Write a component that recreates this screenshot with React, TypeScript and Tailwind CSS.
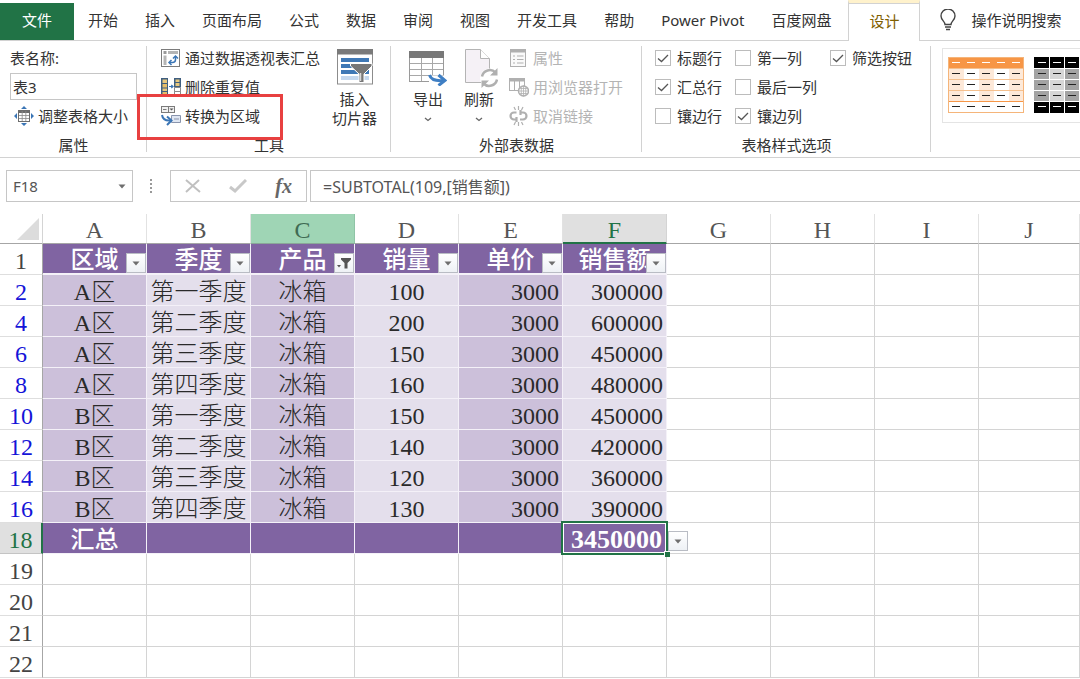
import type { ReactNode } from 'react';

const tabs = ['开始', '插入', '页面布局', '公式', '数据', '审阅', '视图', '开发工具', '帮助', 'Power Pivot', '百度网盘'];
const columns = ['A', 'B', 'C', 'D', 'E', 'F', 'G', 'H', 'I', 'J'];
const headers = ['区域', '季度', '产品', '销量', '单价', '销售额'];
const emptyColumns = ['G', 'H', 'I', 'J'];
const rows = [
  { n: 2, cells: ['A区', '第一季度', '冰箱', '100', '3000', '300000'] },
  { n: 4, cells: ['A区', '第二季度', '冰箱', '200', '3000', '600000'] },
  { n: 6, cells: ['A区', '第三季度', '冰箱', '150', '3000', '450000'] },
  { n: 8, cells: ['A区', '第四季度', '冰箱', '160', '3000', '480000'] },
  { n: 10, cells: ['B区', '第一季度', '冰箱', '150', '3000', '450000'] },
  { n: 12, cells: ['B区', '第二季度', '冰箱', '140', '3000', '420000'] },
  { n: 14, cells: ['B区', '第三季度', '冰箱', '120', '3000', '360000'] },
  { n: 16, cells: ['B区', '第四季度', '冰箱', '130', '3000', '390000'] },
];

const PivotIcon = () => (
  <svg width="20" height="20" viewBox="0 0 20 20" fill="none">
    <rect x="0.500" y="1.500" width="18" height="17" fill="#fff" stroke="#7b7b7b" />
    <rect x="2.500" y="3" width="3" height="3" fill="#9a9a9a" />
    <rect x="7" y="3" width="10" height="3" fill="#b5b5b5" />
    <rect x="2.500" y="7.500" width="3" height="9.500" fill="#b5b5b5" />
    <path d="M9 14.500h2.500q3 0 3-3V9" stroke="#3a75b5" strokeWidth="1.500" />
    <path d="M12 10.500 14.500 8l2.500 2.500M10.500 12 8 14.500l2.500 2.500" stroke="#3a75b5" strokeWidth="1.500" />
  </svg>
);

const DuplicatesIcon = () => (
  <svg width="20" height="20" viewBox="0 0 20 20" fill="none">
    <rect x="0" y="1" width="7" height="18" fill="#3f5f80" />
    <path d="M1.500 2.500H6v3.500H1.500zM1.500 11.500H6v2.500H1.500z" fill="#e8c87d" />
    <path d="M1.500 7H6v3.500H1.500zM1.500 15H6v2.500H1.500z" fill="#e5bd68" />
    <path d="M8 9.500h4M10.300 8l1.700 1.500-1.700 1.500" stroke="#3a75b5" strokeWidth="1.200" />
    <rect x="13" y="1" width="7" height="9.500" fill="#3f5f80" />
    <path d="M14.500 2.500h4v2.500h-4zM14.500 6h4v3h-4z" fill="#e8c87d" />
    <path d="M13.500 10.500h6v4h-6zM13.500 14.500h6v4h-6z" fill="#fff" stroke="#8b8b8b" />
  </svg>
);

const ConvertIcon = () => (
  <svg width="20" height="20" viewBox="0 0 20 20" fill="none">
    <rect x="0.500" y="0.500" width="13" height="6" fill="#f1f1f1" stroke="#7b7b7b" />
    <path d="M7.500 0.500v6M2 3.500h3.500" stroke="#7b7b7b" />
    <path d="M8.500 2.500h4l-2 2z" fill="#555" />
    <path d="M10.500 9.500h9v7h-9z" fill="#dfe6f2" stroke="#8994ad" />
    <path d="M13 13h5" stroke="#8994ad" />
    <path d="M1 9q1 6 8 5.500" stroke="#3a75b5" strokeWidth="2" />
    <path d="M6 10.500 10.500 14.500 6 19" stroke="#3a75b5" strokeWidth="2" />
  </svg>
);

const ResizeIcon = () => (
  <svg width="20" height="20" viewBox="0 0 20 20" fill="none">
    <rect x="4.500" y="4.500" width="11" height="11" fill="#fff" stroke="#6d6d6d" />
    <path d="M4.500 6h11" stroke="#6d6d6d" strokeWidth="2" />
    <path d="M8.200 5v10M11.800 5v10M5 9.500h10M5 12.500h10" stroke="#8a8a8a" strokeWidth="0.800" />
    <path d="M10 0l3 3H7zM10 20l3-3H7zM0 10l3-3v6zM20 10l-3-3v6z" fill="#3a75b5" />
  </svg>
);

const SlicerIcon = () => (
  <svg width="38" height="38" viewBox="0 0 38 38" fill="none">
    <rect x="1.500" y="1.500" width="35" height="34.500" fill="#fff" stroke="#8c8c8c" />
    <rect x="1" y="1" width="36" height="5.500" fill="#7a7a7a" />
    <path d="M5 10h28v4H5zM5 16h28v4H5zM5 22h28v4H5z" fill="#3f78b5" />
    <path d="M5 28h28v4H5z" fill="#c5d8ee" />
    <path d="M14.500 15.500H36v2.500l-8 8v8.500h-5V26l-8.500-8z" fill="#777" stroke="#fff" />
    <path d="M24.500 25v8" stroke="#d8d8d8" strokeWidth="1.500" />
  </svg>
);

const ExportIcon = () => (
  <svg width="38" height="38" viewBox="0 0 38 38" fill="none">
    <rect x="0.500" y="3.500" width="34" height="30" fill="#fff" stroke="#9a9a9a" />
    <rect x="0" y="3" width="35" height="7" fill="#787878" />
    <path d="M12.500 10v23M23.500 10v23M1 15.500h33M1 21.500h33M1 27.500h33" stroke="#a8a8a8" />
    <path d="M20 27.500h18V38H20z" fill="#fff" />
    <path d="M20.500 27q2 6.500 14 5.500" stroke="#3f7fc4" strokeWidth="3" />
    <path d="M29.500 27l6.500 5.500-6.500 5" stroke="#3f7fc4" strokeWidth="3" />
  </svg>
);

const RefreshIcon = () => (
  <svg width="38" height="40" viewBox="0 0 38 40" fill="none">
    <path d="M5.500 1.500h15l9 9v24h-24z" fill="#f5f1f6" stroke="#b4b4b4" />
    <path d="M20.500 1.500v9h9" stroke="#b4b4b4" fill="#fff" />
    <circle cx="29.500" cy="30" r="9.500" fill="#fff" />
    <path d="M22 28.500a8 8 0 0 1 13.500-4M37 31.500a8 8 0 0 1-13.500 4" stroke="#b0b0b0" strokeWidth="2.500" />
    <path d="M37.500 20v7.500H30zM21.500 40v-7.500H29z" fill="#b0b0b0" />
  </svg>
);

const PropertiesIcon = () => (
  <svg width="20" height="20" viewBox="0 0 20 20" fill="none" stroke="#b0b0b0">
    <rect x="1.500" y="1.500" width="15" height="17" fill="#fafafa" />
    <path d="M1 3h16" strokeWidth="3" />
    <path d="M4 8h2M4 11.500h2M4 15h2M8 8h6.500M8 11.500h6.500M8 15h6.500" strokeWidth="1.200" />
  </svg>
);

const BrowserIcon = () => (
  <svg width="20" height="20" viewBox="0 0 20 20" fill="none" stroke="#b0b0b0">
    <rect x="0.500" y="1.500" width="15" height="12" fill="#fff" />
    <path d="M0 3h16" strokeWidth="3" />
    <path d="M5.500 4v9M10.500 4v9" />
    <circle cx="14.500" cy="14" r="5" fill="#fff" strokeWidth="1.500" />
    <path d="M9.500 14h10M14.500 9v10M10.500 11.500h8M10.500 16.500h8" strokeWidth="0.800" />
    <ellipse cx="14.500" cy="14" rx="2.300" ry="5" strokeWidth="0.800" />
  </svg>
);

const UnlinkIcon = () => (
  <svg width="20" height="20" viewBox="0 0 20 20" fill="none" stroke="#b0b0b0">
    <path d="M7.500 6.500H5a3.500 3.500 0 0 0 0 7h2.500M7.500 11v5M11 13.500h3a3.500 3.500 0 0 0 0-7h-2.500M11.500 4v5" strokeWidth="2.200" />
    <path d="M9.500 0v4M9.500 16v4M5 1l1.500 3M14 1l-1.500 3M5 19l1.500-3M14 19l-1.500-3" strokeWidth="1.200" />
  </svg>
);

const BulbIcon = () => (
  <svg width="16" height="22" viewBox="0 0 16 22" fill="none" stroke="#444" strokeWidth="1.400">
    <path d="M5 15.500c0-3-4-4.500-4-8.500a7 7 0 0 1 14 0c0 4-4 5.500-4 8.500z" />
    <path d="M5 18h6M6 20.500h4" />
  </svg>
);

const Chevron = () => (
  <svg width="8" height="5" viewBox="0 0 8 5" fill="none" stroke="#666" strokeWidth="1.300">
    <path d="M1 1l3 2.500L7 1" />
  </svg>
);

const Triangle = () => (
  <svg width="8" height="5" viewBox="0 0 8 5" fill="#6e6e6e">
    <path d="M0.500 0.500h7L4 4.500z" />
  </svg>
);

const FunnelIcon = () => (
  <svg width="14" height="11" viewBox="0 0 14 11" fill="#555">
    <path d="M4 0h10v1.500L10.500 5v5.500h-3V5L4 1.500z" />
    <path d="M0 7h4L2 9.500z" />
  </svg>
);

function Group({ label, className, children }: { label: string; className: string; children: ReactNode }) {
  return (
    <section aria-label={label} className={`relative flex shrink-0 flex-col pt-[2px] ${className}`}>
      <div className="flex h-[87px]">{children}</div>
      <div className="flex h-[27px] items-center justify-center pt-0.5 leading-5">{label}</div>
      <div className="absolute right-0 top-[5px] h-[106px] w-px bg-[#d2d2d2]" />
    </section>
  );
}

function SmallButton({ icon, children, disabled }: { icon: ReactNode; children: ReactNode; disabled?: boolean }) {
  return (
    <button disabled={disabled} className="flex h-[29px] items-center gap-1 whitespace-nowrap disabled:text-[#b4b4b4]">
      {icon}
      {children}
    </button>
  );
}

function Check({ label, checked }: { label: string; checked?: boolean }) {
  return (
    <label className="flex h-[29px] items-center gap-1.5 whitespace-nowrap">
      <span className="relative flex size-4">
        <input type="checkbox" defaultChecked={checked} className="peer size-4 appearance-none border border-[#bcbcbc] bg-white" />
        <svg viewBox="0 0 16 16" fill="none" stroke="#555" strokeWidth="1.300" className="pointer-events-none absolute inset-0 size-4 opacity-0 peer-checked:opacity-100">
          <path d="M3 8.500l3.500 3L13 5" />
        </svg>
      </span>
      {label}
    </label>
  );
}

function StylePreview({ dark }: { dark?: boolean }) {
  const fill = (r: number, c: number) => {
    if (dark) return r === 0 || r === 4 ? '#000' : c % 2 ? '#d6d6d6' : '#a3a3a3';
    if (r === 0) return '#f79646';
    return r < 4 && c % 2 === 0 ? '#fde9d9' : '#fff';
  };
  const line = dark ? '#fff' : '#f5c08e';
  return (
    <svg width="76" height="56" viewBox="0 0 76 56" shapeRendering="crispEdges">
      {[0, 1, 2, 3, 4].map((r) =>
        [0, 1, 2, 3, 4].map((c) => (
          <g key={`${r}-${c}`}>
            <rect x={c * 15 + (c ? 1 : 0)} y={r * 11 + (r ? 1 : 0)} width={c ? 15 : 16} height={r ? 11 : 12} fill={fill(r, c)} />
            <rect x={c * 15 + 4} y={r * 11 + 5} width="8" height="1" fill={r === 0 || (dark && r === 4) ? '#fff' : '#222'} />
          </g>
        )),
      )}
      {[1, 2, 3, 4].map((r) => (
        <rect key={r} x="0" y={r * 11} width="76" height="1" fill={r === 4 && !dark ? '#f79646' : line} />
      ))}
      {dark && [1, 2, 3, 4].map((c) => <rect key={c} x={c * 15} y="0" width="1" height="56" fill="#fff" />)}
      {!dark && <rect x="0.500" y="0.500" width="75" height="55" fill="none" stroke="#f5b57a" />}
    </svg>
  );
}

const dropButton = 'flex size-5 items-center justify-center border border-[#b9bcc4] bg-linear-to-b from-white to-[#eef1f5]';
const bodyCell = 'border-b border-r border-b-[#f4f1f8] border-r-[#f4f1f8] p-0 pt-1 ';
const emptyCell = 'border-b border-r border-[#d4d4d4] p-0';
const rowHeader = 'border-b border-r border-r-[#a6a6a6] border-b-[#dedede] p-0 pt-1 text-center font-normal';

function Sheet() {
  return (
    <table className="w-full table-fixed border-separate border-spacing-0 font-['Liberation_Serif','Noto_Sans_CJK_SC',serif] text-2xl leading-[26px] text-[#2a2a2a]">
      <colgroup>
        <col className="w-[43px]" />
        {columns.map((c) => (
          <col key={c} className={c === 'J' ? '' : 'w-[104px]'} />
        ))}
      </colgroup>
      <thead>
        <tr className="h-[30px]">
          <th className="border-b border-r border-b-[#a6a6a6] border-r-[#d4d4d4] p-0">
            <svg width="22" height="22" viewBox="0 0 22 22" className="ml-auto mr-[3px]" aria-label="全选">
              <path d="M22 0v22H0z" fill="#dcdcdc" />
            </svg>
          </th>
          {columns.map((c) => (
            <th
              key={c}
              scope="col"
              className={
                c === 'C'
                  ? 'border-b border-r border-b-[#8aa898] border-r-[#8fc4a6] bg-[#9fd5b5] p-0 pt-1 font-normal leading-[25px] text-[#3f6b53]'
                  : c === 'F'
                    ? 'border-b-2 border-r border-b-[#217346] border-r-[#d4d4d4] bg-[#e0e0e0] p-0 pt-1 font-normal leading-6 text-[#217346]'
                    : 'border-b border-r border-b-[#a6a6a6] border-r-[#e2e2e2] p-0 pt-1 font-normal leading-[25px] text-[#555]'
              }
            >
              {c}
            </th>
          ))}
        </tr>
      </thead>
      <tbody>
        <tr className="h-[31px]">
          <th scope="row" className={rowHeader + ' text-[#444]'}>1</th>
          {headers.map((h, i) => (
            <td key={h} className="relative border-b-2 border-r border-[#f4f1f8] bg-[#8064a2] p-0 pt-1 text-center font-medium leading-[25px] text-white">
              {h}
              <button aria-label={`筛选${h}`} className={`absolute bottom-0 right-0 ${dropButton}`}>
                {i === 2 ? <FunnelIcon /> : <Triangle />}
              </button>
            </td>
          ))}
          {emptyColumns.map((c) => (
            <td key={c} className={emptyCell} />
          ))}
        </tr>
        {rows.map((row) => (
          <tr key={row.n} className="h-[31px]">
            <th scope="row" className={rowHeader + ' text-[#1414d8]'}>{row.n}</th>
            {row.cells.map((v, i) => (
              <td
                key={i}
                className={
                  bodyCell + (i % 2 ? 'bg-[#e4dfec] ' : 'bg-[#ccc0da] ') + (i > 3 ? 'pr-[3px] text-right' : 'text-center') + ' font-light'
                }
              >
                {v}
              </td>
            ))}
            {emptyColumns.map((c) => (
              <td key={c} className={emptyCell} />
            ))}
          </tr>
        ))}
        <tr className="h-[31px]">
          <th scope="row" className="border-b border-r-2 border-b-[#c4c4c4] border-r-[#217346] bg-[#e0e0e0] p-0 pt-1 text-center font-normal text-[#217346]">18</th>
          <td className="border-b border-r border-[#f4f1f8] bg-[#8064a2] p-0 pt-1 text-center font-medium text-white">汇总</td>
          {['B', 'C', 'D', 'E'].map((c) => (
            <td key={c} className="border-b border-r border-[#f4f1f8] bg-[#8064a2] p-0" />
          ))}
          <td className="relative border-b border-r border-[#f4f1f8] bg-[#8064a2] p-0 pr-1 pt-1 text-right text-[26px] font-bold text-white">
            3450000
            <div className="pointer-events-none absolute -inset-0.5 border-2 border-[#217346]">
              <div className="size-full border border-white" />
            </div>
            <div className="absolute -bottom-1 -right-1 size-1.5 border-l border-t border-white bg-[#217346]" />
            <button aria-label="汇总方式" className={`absolute -right-[22px] bottom-0.5 ${dropButton}`}>
              <Triangle />
            </button>
          </td>
          {emptyColumns.map((c) => (
            <td key={c} className={emptyCell} />
          ))}
        </tr>
        {[19, 20, 21, 22].map((n) => (
          <tr key={n} className="h-[31px]">
            <th scope="row" className={rowHeader + ' text-[#444]'}>{n}</th>
            {columns.map((c) => (
              <td key={c} className={emptyCell} />
            ))}
          </tr>
        ))}
      </tbody>
    </table>
  );
}

export default function App() {
  return (
    <div className="min-h-screen overflow-hidden bg-white font-['Noto_Sans','Noto_Sans_CJK_SC',sans-serif] text-[15px] leading-5 text-[#333]">
      <nav className="flex h-[41px] items-stretch whitespace-nowrap border-b border-[#d2d2d2]">
        <button className="mt-[3px] w-[74px] shrink-0 bg-[#217346] pb-1 text-white">文件</button>
        <div className="ml-3.5 flex shrink-0 gap-[27px]">
          {tabs.map((t) => (
            <button key={t}>{t}</button>
          ))}
        </div>
        <button className="-mb-px ml-[17px] w-[72px] shrink-0 border-x border-t-[3px] border-x-[#d2d2d2] border-t-[#fff2cc] bg-white text-[#7f6000]">
          <span className="flex h-full items-center justify-center border-t border-[#d2d2d2] pb-1">设计</span>
        </button>
        <button className="ml-5 flex shrink-0 items-center gap-[15px]">
          <BulbIcon />
          操作说明搜索
        </button>
      </nav>

      <div className="relative flex h-[117px] border-b border-[#d2d2d2]">
        <Group label="属性" className="w-[147px]">
          <div className="flex flex-col pl-2.5">
            <label htmlFor="table-name" className="flex h-[29px] items-center">表名称:</label>
            <input id="table-name" defaultValue="表3" className="mt-px h-[27px] w-[127px] border border-[#c6c6c6] px-0.5" />
            <div className="pl-1 pt-px">
              <SmallButton icon={<ResizeIcon />}>调整表格大小</SmallButton>
            </div>
          </div>
        </Group>
        <Group label="工具" className="w-[244px]">
          <div className="ml-3.5 flex flex-col">
            <SmallButton icon={<PivotIcon />}>通过数据透视表汇总</SmallButton>
            <SmallButton icon={<DuplicatesIcon />}>删除重复值</SmallButton>
            <SmallButton icon={<ConvertIcon />}>转换为区域</SmallButton>
          </div>
          <button className="ml-3 flex flex-col items-center pt-[5px] leading-[19px]">
            <SlicerIcon />
            <span className="pt-1">插入</span>
            <span>切片器</span>
          </button>
        </Group>
        <Group label="外部表数据" className="w-[251px]">
          <button className="ml-[18px] flex w-[38px] flex-col items-center pt-[5px] leading-[19px]">
            <ExportIcon />
            <span className="pb-2 pt-1">导出</span>
            <Chevron />
          </button>
          <button className="ml-[13px] flex w-[38px] flex-col items-center pt-[5px] leading-[19px]">
            <RefreshIcon />
            <span className="pb-2 pt-0.5">刷新</span>
            <Chevron />
          </button>
          <div className="ml-[11px] flex flex-col">
            <SmallButton disabled icon={<PropertiesIcon />}>属性</SmallButton>
            <SmallButton disabled icon={<BrowserIcon />}>用浏览器打开</SmallButton>
            <SmallButton disabled icon={<UnlinkIcon />}>取消链接</SmallButton>
          </div>
        </Group>
        <Group label="表格样式选项" className="w-[289px]">
          <div className="ml-[13px] flex flex-col">
            <Check label="标题行" checked />
            <Check label="汇总行" checked />
            <Check label="镶边行" />
          </div>
          <div className="ml-[13px] flex flex-col">
            <Check label="第一列" />
            <Check label="最后一列" />
            <Check label="镶边列" checked />
          </div>
          <div className="ml-[13px] flex flex-col">
            <Check label="筛选按钮" checked />
          </div>
        </Group>
        <div className="ml-[11px] mt-[7px] flex h-[75px] min-w-0 flex-1 gap-2.5 overflow-hidden border border-r-0 border-[#e4e4e4] pl-[5px] pt-2">
          <button aria-label="橙色表格样式" className="size-fit shrink-0"><StylePreview /></button>
          <button aria-label="黑色表格样式" className="size-fit shrink-0"><StylePreview dark /></button>
        </div>
        <div className="pointer-events-none absolute left-[137px] top-[53px] h-[46px] w-[146px] border-[3px] border-[#e84040]" />
      </div>

      <div className="flex h-14 items-center pl-1.5">
        <button className="flex h-8 w-[127px] shrink-0 items-center justify-between border border-[#c6c6c6] px-1.5 text-[#555]">
          F18
          <Triangle />
        </button>
        <svg width="4" height="14" viewBox="0 0 4 14" fill="#999" className="ml-4">
          <path d="M1 0h2v2H1zM1 4h2v2H1zM1 8h2v2H1zM1 12h2v2H1z" />
        </svg>
        <div className="ml-[17px] flex h-8 w-[137px] shrink-0 items-center justify-between border border-[#c6c6c6] px-3.5">
          <button aria-label="取消">
            <svg width="16" height="14" viewBox="0 0 16 14" fill="none" stroke="#c0c0c0" strokeWidth="2">
              <path d="M1 1l14 12M14 1L1 13" />
            </svg>
          </button>
          <button aria-label="输入">
            <svg width="18" height="14" viewBox="0 0 18 14" fill="none" stroke="#c8c8c8" strokeWidth="3">
              <path d="M1 8l5 4L17 1" />
            </svg>
          </button>
          <button aria-label="插入函数" className="font-['Liberation_Serif',serif] text-xl font-bold italic text-[#666]">fx</button>
        </div>
        <input aria-label="编辑栏" defaultValue="=SUBTOTAL(109,[销售额])" className="ml-[3px] h-8 min-w-0 flex-1 border border-r-0 border-[#c6c6c6] px-3 text-base text-[#555]" />
      </div>

      <Sheet />
    </div>
  );
}
